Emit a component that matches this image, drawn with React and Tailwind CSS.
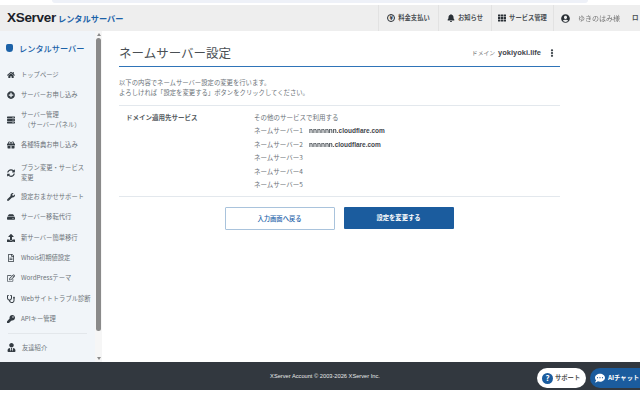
import { FaHome, FaPlusCircle, FaServer, FaGift, FaSyncAlt, FaWrench, FaHdd, FaUpload, FaRegFileAlt, FaRegEdit, FaStethoscope, FaKey, FaUserTie, FaBell, FaTh, FaUserCircle, FaEllipsisV, FaCommentDots } from "react-icons/fa";

const font = { fontFamily: '"Noto Sans CJK JP", "Liberation Sans", sans-serif' };
const latin = { fontFamily: '"Liberation Sans", sans-serif' };

const menu = [
  { icon: FaHome, label: "トップページ", h: "h-[20.3px]" },
  { icon: FaPlusCircle, label: "サーバーお申し込み", h: "h-[20.3px]" },
  { icon: FaServer, label: "サーバー管理", sub: "（サーバーパネル）", h: "h-[29px]" },
  { icon: FaGift, label: "各種特典お申し込み", h: "h-[20.3px]" },
  { icon: FaSyncAlt, label: "プラン変更・サービス", sub2: "変更", h: "h-[32px] pt-[4px]" },
  { icon: FaWrench, label: "設定おまかせサポート", h: "h-[20.3px]" },
  { icon: FaHdd, label: "サーバー移転代行", h: "h-[20.3px]" },
  { icon: FaUpload, label: "新サーバー簡単移行", h: "h-[20.3px]" },
  { icon: FaRegFileAlt, label: "Whois初期値設定", h: "h-[20.3px]" },
  { icon: FaRegEdit, label: "WordPressテーマ", h: "h-[20.3px]" },
  { icon: FaStethoscope, label: "Webサイトトラブル診断", h: "h-[20.3px]" },
  { icon: FaKey, label: "APIキー管理", h: "h-[20.3px]" },
];

function MenuItem({ item }) {
  const Icon = item.icon;
  return (
    <div className={`flex items-center gap-[6px] pl-[7px] ${item.h}`}>
      <Icon size={8} className="shrink-0 text-[#333b42]" />
      <div className="whitespace-nowrap text-[6.3px] leading-[10px] text-[#6b7278]">
        <div>{item.label}</div>
        {item.sub && <div className="pl-[3px]">{item.sub}</div>}
        {item.sub2 && <div>{item.sub2}</div>}
      </div>
    </div>
  );
}

function HeaderLink({ icon, label, width }) {
  return (
    <div className={`flex h-full items-center justify-center gap-[3px] border-l border-[#e2e2e2] ${width}`}>
      {icon}
      <span className="text-[6.3px] font-bold text-[#4a4f54]">{label}</span>
    </div>
  );
}

function Ns({ label, value, blurred }) {
  return (
    <div className="flex h-[13.5px] items-center text-[6.5px] text-[#6b7278]">
      <span className="w-[55px] whitespace-nowrap">{label}</span>
      {value && (
        <span className="text-[6.5px] font-bold text-[#3f464c]" style={latin}>
          <span className="blur-[0.6px]">{blurred}</span>{value}
        </span>
      )}
    </div>
  );
}

export default function App() {
  return (
    <div className="relative flex h-[400px] w-[640px] flex-col overflow-hidden bg-white" style={font}>
      {/* browser remnant */}
      <div className="flex h-[5px] px-[52px]">
        <div className="h-[3px] w-[553px] rounded-b-lg bg-[#eef1f8]" />
      </div>

      <header className="flex h-[26px] items-center bg-[#eeeeee]">
        <div className="flex items-center gap-[2px] pl-[7px]">
          <span className="text-[13.5px] font-bold tracking-[-0.3px] text-[#1b2128]" style={latin}>XServer</span>
          <span className="text-[8.2px] font-bold text-[#1c62a8]">レンタルサーバー</span>
        </div>
        <div className="ml-auto flex h-full">
          <HeaderLink width="w-[60px]" label="料金支払い" icon={<span className="flex h-[8px] w-[8px] items-center justify-center rounded-full border border-[#2a3036] text-[6px] font-bold leading-none text-[#2a3036]">¥</span>} />
          <HeaderLink width="w-[53px]" label="お知らせ" icon={<FaBell size={8} className="text-[#2a3036]" />} />
          <HeaderLink width="w-[62px]" label="サービス管理" icon={<FaTh size={8} className="text-[#2a3036]" />} />
          <div className="flex h-[26px] w-[87px] items-center border-l border-[#e2e2e2] pl-[7px]">
            <FaUserCircle size={9} className="shrink-0 text-[#2a3036]" />
            <span className="ml-[8px] whitespace-nowrap text-[7px] text-[#777] blur-[0.7px]">ゆきのはみ様</span>
            <span className="ml-[12px] text-[6.5px] font-bold text-[#4a4f54]">ロ</span>
          </div>
        </div>
      </header>

      <div className="flex min-h-0 flex-1">
        <aside className="flex w-[102px] shrink-0 bg-[#f1f5f9]">
          <div className="w-[95px]">
            <div className="flex h-[34px] items-center gap-[6px] pl-[6px]">
              <div className="h-[8px] w-[7px] rounded-b-[4px] rounded-t-[2px] bg-[#1c62a8]" />
              <span className="text-[8.2px] font-medium text-[#1c62a8]">レンタルサーバー</span>
            </div>
            <div className="flex flex-col">
              {menu.map((item) => <MenuItem key={item.label} item={item} />)}
            </div>
            <div className="mx-[8px] mt-[4px] border-t border-[#e3e7eb]" />
            <div className="mt-[4px] flex h-[20px] items-center gap-[6px] pl-[7px]">
              <FaUserTie size={9} className="text-[#333b42]" />
              <span className="text-[6.3px] text-[#6b7278]">友達紹介</span>
            </div>
          </div>
          <div className="flex w-[7px] flex-col items-center bg-[#f6f6f6]">
            <span className="mt-[2px] h-0 w-0 border-x-[2px] border-b-[3px] border-x-transparent border-b-[#8a8a8a]" />
            <div className="mt-[2px] h-[293px] w-[5px] rounded-full bg-[#8a8a8a]" />
            <span className="mt-auto mb-[2px] h-0 w-0 border-x-[2px] border-t-[3px] border-x-transparent border-t-[#8a8a8a]" />
          </div>
        </aside>

        <main className="w-[458px] pl-[17px] text-[#6b7278]">
          <div className="flex h-[36px] items-center justify-between border-b-[1.5px] border-[#2f74b8] pt-[12px] pb-[3px]">
            <h1 className="text-[12.5px] font-normal leading-none text-[#4a4f54]">ネームサーバー設定</h1>
            <div className="flex items-center pr-[4px]">
              <span className="text-[5.8px] text-[#777]">ドメイン</span>
              <span className="ml-[3px] text-[7.5px] font-bold text-[#3f464c]" style={latin}>yokiyoki.life</span>
              <FaEllipsisV size={8} className="ml-[7px] text-[#3f464c]" />
            </div>
          </div>

          <p className="mt-[11px] text-[6.35px] leading-[10px]">
            以下の内容でネームサーバー設定の変更を行います。<br />
            よろしければ「設定を変更する」ボタンをクリックしてください。
          </p>

          <div className="mt-[7px] flex border-y-[1.5px] border-[#e3e8ed] pt-[5px] pb-[4px]">
            <div className="w-[135px] pl-[7px] text-[6.5px] font-bold leading-[13.5px] text-[#565c62]">ドメイン適用先サービス</div>
            <div>
              <div className="flex h-[13.5px] items-center text-[6.5px]">その他のサービスで利用する</div>
              <Ns label="ネームサーバー1" blurred="nnnnnnn." value="cloudflare.com" />
              <Ns label="ネームサーバー2" blurred="nnnnnn." value="cloudflare.com" />
              <Ns label="ネームサーバー3" />
              <Ns label="ネームサーバー4" />
              <Ns label="ネームサーバー5" />
            </div>
          </div>

          <div className="mt-[10px] flex items-start justify-center gap-[9px] pr-[1px]">
            <button className="flex h-[23px] w-[110px] items-center justify-center rounded-[1px] border border-[#a9c3dc] bg-white text-[6.3px] font-medium text-[#1c62a8]">入力画面へ戻る</button>
            <button className="flex h-[22px] w-[110px] items-center justify-center rounded-[1px] bg-[#1b5c9e] text-[6.3px] font-bold text-white">設定を変更する</button>
          </div>
        </main>
      </div>

      <footer className="flex h-[28px] items-center bg-[#32383f] pl-[10px]">
        <p className="w-full text-center text-[5.7px] font-medium text-[#e6e8ea]" style={latin}>XServer Account © 2003-2026 XServer Inc.</p>
      </footer>
      <div className="h-[10px]" />

      {/* floating buttons */}
      <div className="absolute left-[537px] top-[368px] flex h-[20px] w-[49px] items-center gap-[2px] rounded-full bg-white pl-[5px]">
        <span className="flex h-[11px] w-[11px] items-center justify-center rounded-full bg-[#1b5c9e] text-[8px] font-bold leading-none text-white">?</span>
        <span className="text-[6.3px] font-bold text-[#555]">サポート</span>
      </div>
      <div className="absolute left-[590px] top-[368px] flex h-[20px] w-[60px] items-center gap-[3px] rounded-l-full bg-[#1b5c9e] pl-[5px]">
        <FaCommentDots size={10} className="text-white" />
        <span className="whitespace-nowrap text-[6.3px] font-bold text-white">AIチャット</span>
      </div>
    </div>
  );
}
